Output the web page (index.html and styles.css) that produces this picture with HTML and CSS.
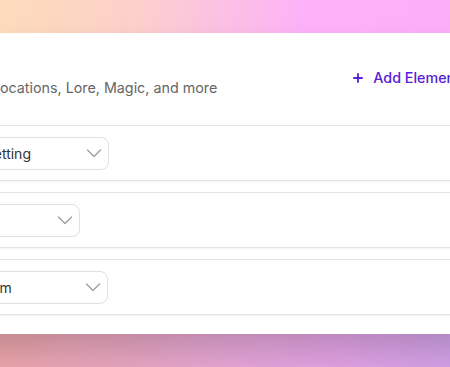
FILE: index.html
```html
<!DOCTYPE html>
<html lang="en">
<head>
<meta charset="utf-8">
<title>Story Elements</title>
<link rel="stylesheet" href="styles.css">
</head>
<body>
<div class="page">
  <section class="card">
    <header class="head">
      <div class="intro">
        <h1 class="title">Story Bible</h1>
        <p class="sub">Track Characters, Locations, Lore, Magic, and more</p>
      </div>
      <button class="add" type="button">
        <svg class="add-icon" width="16" height="16" viewBox="0 0 16 16" aria-hidden="true"><path d="M8 4v8M4 8h8" fill="none" stroke="currentColor" stroke-width="1.8" stroke-linecap="round"/></svg>
        <span>Add Element</span>
      </button>
    </header>
    <div class="rows">
      <div class="row">
        <div class="field field-a"><span class="field-text">Fantasy Setting</span><svg class="chev" width="16" height="16" viewBox="0 0 16 16" aria-hidden="true"><path d="M1.5 5l6.5 6.5 6.5-6.5" fill="none" stroke="currentColor" stroke-width="1.5" stroke-linecap="round" stroke-linejoin="round"/></svg></div>
      </div>
      <div class="row">
        <div class="field field-b"><span class="field-text">Dark</span><svg class="chev" width="16" height="16" viewBox="0 0 16 16" aria-hidden="true"><path d="M1.5 5l6.5 6.5 6.5-6.5" fill="none" stroke="currentColor" stroke-width="1.5" stroke-linecap="round" stroke-linejoin="round"/></svg></div>
      </div>
      <div class="row">
        <div class="field field-c"><span class="field-text">Astral Realm</span><svg class="chev" width="16" height="16" viewBox="0 0 16 16" aria-hidden="true"><path d="M1.5 5l6.5 6.5 6.5-6.5" fill="none" stroke="currentColor" stroke-width="1.5" stroke-linecap="round" stroke-linejoin="round"/></svg></div>
      </div>
    </div>
  </section>
</div>
</body>
</html>
```
FILE: styles.css
```css
* { box-sizing: border-box; }
html, body { margin: 0; padding: 0; }
body {
  font-family: Inter, "Noto Sans", "Liberation Sans", sans-serif;
  width: 450px;
  height: 367px;
  overflow: hidden;
}
.page {
  height: 367px;
  padding: 33px 0;
  overflow: hidden;
  background:
    linear-gradient(to right, #fddcba 0%, #fdd0cc 30%, #fcc0e4 50%, #fdb2f8 68%, #fcaff9 100%) top / 100% 50% no-repeat,
    linear-gradient(to right, #f2aab0 0%, #eeaac4 25%, #ecaadc 50%, #e8a6ea 75%, #d8a6ee 100%) bottom / 100% 50% no-repeat;
}
.card {
  margin-left: -156.5px;
  width: 652.5px;
  height: 301px;
  background: #fff;
  border-radius: 16px;
  box-shadow: 0 25px 50px -12px rgba(0, 0, 0, 0.25);
  padding: 24px 24px 19px;
  display: flex;
  flex-direction: column;
}
.head {
  display: flex;
  justify-content: space-between;
  align-items: center;
  margin-bottom: 27px;
}
.title {
  margin: 0;
  font-size: 18px;
  line-height: 21px;
  font-weight: 600;
  color: #111827;
}
.sub {
  margin: 0;
  font-size: 14.3px;
  line-height: 20px;
  color: #666;
}
.add {
  display: flex;
  align-items: center;
  gap: 7px;
  border: 0;
  background: transparent;
  padding: 8px 12px;
  font: inherit;
  font-size: 14.3px;
  line-height: 20px;
  font-weight: 500;
  color: #5520d8;
}
.add-icon { display: block; }
.rows {
  display: flex;
  flex-direction: column;
  gap: 11px;
}
.row {
  height: 56px;
  border: 1px solid #e5e5e5;
  border-radius: 12px;
  box-shadow: 0 1px 2px rgba(0, 0, 0, 0.05);
  display: flex;
  align-items: center;
  padding: 0 16px 0 45.5px;
}
.field {
  height: 33px;
  border: 1px solid #e0e0e0;
  border-radius: 8px;
  display: flex;
  align-items: center;
  justify-content: space-between;
  padding: 0 6px 0 14px;
  font-size: 14px;
  color: #333;
}
.field-a { width: 195px; }
.field-b { width: 166px; }
.field-c { width: 194px; }
.chev { display: block; color: #a3a3a3; }
```
